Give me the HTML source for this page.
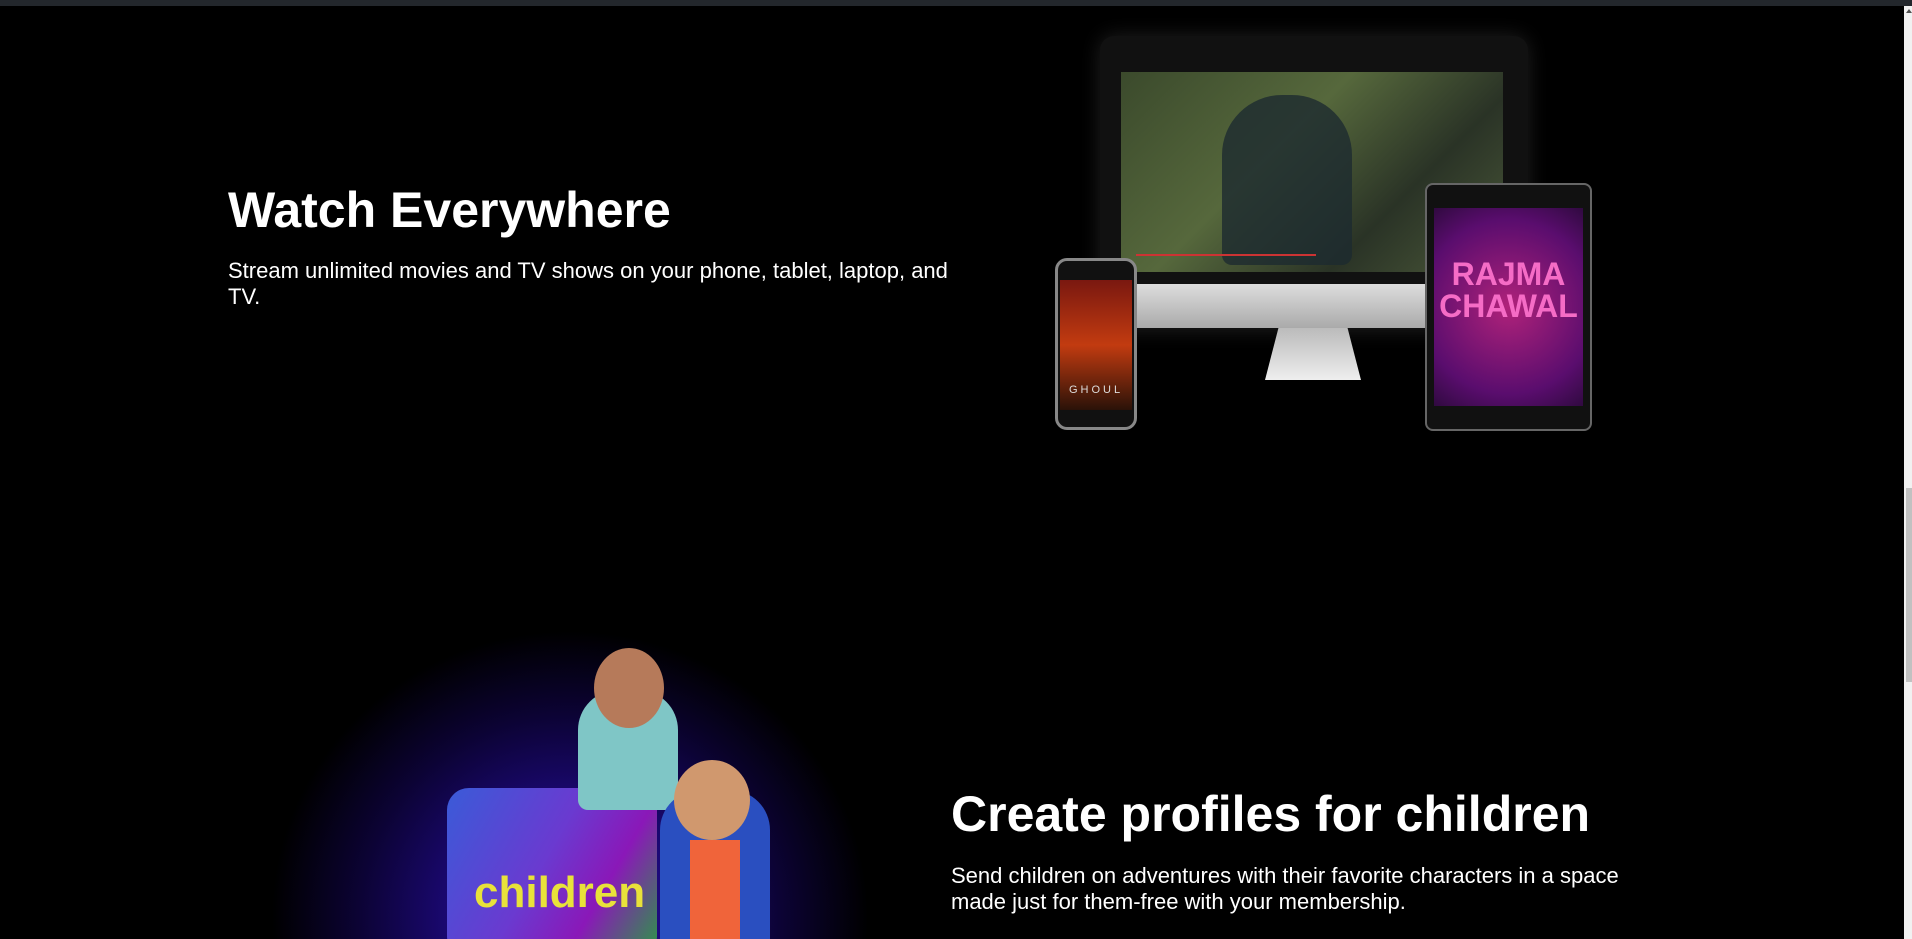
<!DOCTYPE html>
<html><head><meta charset="utf-8"><style>
*{margin:0;padding:0;box-sizing:border-box}
html{width:1912px;height:939px;overflow:hidden;background:#000}
body{width:1912px;height:939px;background:#000;overflow:hidden;font-family:"Liberation Sans",Arial,sans-serif;color:#fff;position:relative}
.top{position:absolute;left:0;top:0;width:1912px;height:6px;background:#23272c}
.sb{position:absolute;left:1904px;top:6px;width:8px;height:933px;background:#f1f1f1}
.th{position:absolute;left:1906px;top:488px;width:6px;height:194px;background:#c1c1c1}
.arr{position:absolute;left:1906px;top:9px;width:0;height:0;border-left:3px solid transparent;border-right:3px solid transparent;border-bottom:4px solid #505050}
h2{position:absolute;font-size:50px;font-weight:bold;line-height:60px;white-space:nowrap}
p{position:absolute;font-size:22px;line-height:26px}
.clip{position:absolute;left:0;top:0;width:1904px;height:939px;overflow:hidden}
</style></head><body>
<div class="clip">
<h2 style="left:228px;top:180px">Watch Everywhere</h2>
<p style="left:228px;top:258px;width:740px">Stream unlimited movies and TV shows on your phone, tablet, laptop, and TV.</p>

<div style="position:absolute;left:1100px;top:36px;width:428px;height:294px;background:#111;border-radius:14px;box-shadow:0 0 20px rgba(255,255,255,.12)"></div>
<div style="position:absolute;left:1121px;top:72px;width:382px;height:200px;background:linear-gradient(135deg,#3b4a2c,#56683c 40%,#2a3326 70%,#4c5a3a)"></div>
<div style="position:absolute;left:1222px;top:95px;width:130px;height:170px;background:#1d2a30;border-radius:60px 60px 10px 10px;opacity:.8"></div>
<div style="position:absolute;left:1136px;top:254px;width:180px;height:2px;background:#c33"></div>
<div style="position:absolute;left:1120px;top:284px;width:385px;height:44px;background:linear-gradient(#ddd,#aaa);border-radius:0 0 10px 10px"></div>
<div style="position:absolute;left:1265px;top:328px;width:96px;height:52px;background:linear-gradient(#bbb,#eee);clip-path:polygon(14% 0,86% 0,100% 100%,0 100%)"></div>
<div style="position:absolute;left:1425px;top:183px;width:167px;height:248px;background:#111;border:2px solid #666;border-radius:8px"></div>
<div style="position:absolute;left:1434px;top:208px;width:149px;height:198px;background:radial-gradient(circle,#b0227a,#5a0d6e 70%,#300a40)"></div>
<div style="position:absolute;left:1434px;top:258px;width:149px;text-align:center;color:#f56cc6;font-weight:bold;font-size:32px;line-height:32px">RAJMA<br>CHAWAL</div>
<div style="position:absolute;left:1055px;top:258px;width:82px;height:172px;background:#111;border:3px solid #888;border-radius:12px"></div>
<div style="position:absolute;left:1060px;top:280px;width:72px;height:130px;background:linear-gradient(#7a1810,#c23b10 50%,#2a1208)"></div>
<div style="position:absolute;left:1060px;top:384px;width:72px;text-align:center;font-size:11px;letter-spacing:3px;color:#ddd">GHOUL</div>

<div style="position:absolute;left:260px;top:620px;width:620px;height:540px;background:radial-gradient(ellipse at 50% 55%,#2a12a8 0%,#1a0870 28%,#0c0335 48%,rgba(0,0,0,0) 68%)"></div>
<div style="position:absolute;left:447px;top:788px;width:210px;height:170px;border-radius:22px;background:linear-gradient(120deg,#3a5bd8 0%,#6a3ad0 45%,#8a18b8 70%,#2a9a44 100%)"></div>
<div style="position:absolute;left:474px;top:868px;font-size:44px;font-weight:bold;color:#e8e23a">children</div>
<div style="position:absolute;left:578px;top:690px;width:100px;height:120px;background:#7fc6c6;border-radius:40px 40px 10px 10px"></div>
<div style="position:absolute;left:594px;top:648px;width:70px;height:80px;background:#b67a5a;border-radius:50%"></div>
<div style="position:absolute;left:660px;top:790px;width:110px;height:160px;background:#2a4fc0;border-radius:40px 40px 0 0"></div>
<div style="position:absolute;left:674px;top:760px;width:76px;height:80px;background:#d0986e;border-radius:50%"></div>
<div style="position:absolute;left:690px;top:840px;width:50px;height:99px;background:#f0643a"></div>

<h2 style="left:951px;top:784px">Create profiles for children</h2>
<p style="left:951px;top:863px;width:700px">Send children on adventures with their favorite characters in a space made just for them-free with your membership.</p>
</div>
<div class="top"></div>
<div class="sb"></div><div class="th"></div><div class="arr"></div>
</body></html>
